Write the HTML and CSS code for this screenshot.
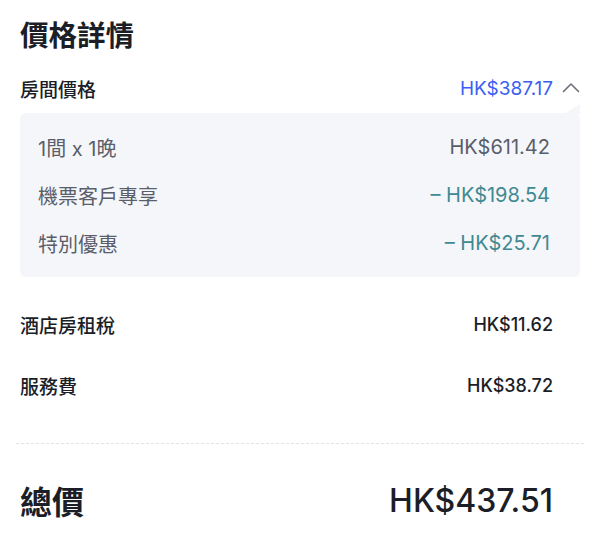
FILE: index.html
```html
<!DOCTYPE html>
<html lang="zh-Hant">
<head>
<meta charset="utf-8">
<link rel="stylesheet" href="styles.css">
</head>
<body>
<div class="page">
  <h1 class="title">價格詳情</h1>
  <div class="room-row">
    <span class="label">房間價格</span>
    <span class="room-price">HK$387.17
      <svg class="chev" width="18" height="11" viewBox="0 0 18 11"><path d="M1.5 9.5 L9 2 L16.5 9.5" fill="none" stroke="#6b6f78" stroke-width="1.6" stroke-linecap="round" stroke-linejoin="round"/></svg>
    </span>
  </div>
  <div class="detail">
    <div class="drow"><span>1間 x 1晚</span><span class="amt">HK$611.42</span></div>
    <div class="drow"><span>機票客戶專享</span><span class="amt disc">– HK$198.54</span></div>
    <div class="drow"><span>特別優惠</span><span class="amt disc">– HK$25.71</span></div>
  </div>
  <div class="fees">
    <div class="frow"><span class="label">酒店房租稅</span><span class="fprice">HK$11.62</span></div>
    <div class="frow"><span class="label">服務費</span><span class="fprice">HK$38.72</span></div>
  </div>
  <div class="divider"></div>
  <div class="total">
    <span class="tlabel">總價</span>
    <span class="tprice">HK$437.51</span>
  </div>
</div>
</body>
</html>
```
FILE: styles.css
```css
html, body {
  margin: 0;
  padding: 0;
  background: #ffffff;
}
body {
  font-family: Inter, "Noto Sans CJK TC", sans-serif;
  color: #1b1e27;
}
.page {
  width: 600px;
  padding: 16px 16px 0 16px;
  box-sizing: border-box;
}
.title {
  margin: 0 0 0 4px;
  height: 40px;
  line-height: 40px;
  font-size: 28.5px;
  font-weight: 700;
  color: #1b1e27;
}
.room-row {
  margin: 12px 4px 0 4px;
  height: 40px;
  display: flex;
  align-items: center;
  justify-content: space-between;
}
.label {
  font-size: 19px;
  font-weight: 500;
  color: #1b1e27;
}
.room-price {
  display: flex;
  align-items: center;
  gap: 9px;
  font-size: 19px;
  color: #3b5ef2;
}
.chev {
  display: block;
  margin-top: -2px;
}
.detail {
  position: relative;
  margin: 5px 4px 0 4px;
  padding: 10px 30px 10px 18px;
  background: #f5f6fa;
  border-radius: 6px;
}
.detail::before {
  content: "";
  position: absolute;
  right: 0;
  top: -9px;
  width: 16px;
  height: 10px;
  background: #f5f6fa;
  clip-path: polygon(100% 0, 100% 100%, 0 100%);
}
.drow {
  height: 48px;
  display: flex;
  align-items: center;
  justify-content: space-between;
  font-size: 20px;
  font-weight: 400;
  color: #5a5e6a;
}
.amt {
  font-size: 20px;
}
.disc {
  color: #3f8a92;
}
.fees {
  margin: 17px 31px 0 4px;
}
.frow {
  height: 61px;
  display: flex;
  align-items: center;
  justify-content: space-between;
}
.fprice {
  font-size: 18px;
  font-weight: 500;
  color: #1b1e27;
}
.divider {
  margin-top: 27px;
  border-top: 1.5px dashed #e2e4e9;
}
.total {
  margin: 26px 31px 0 4px;
  height: 60px;
  display: flex;
  align-items: center;
  justify-content: space-between;
}
.tlabel {
  font-size: 32px;
  font-weight: 700;
}
.tprice {
  font-size: 32px;
  font-weight: 500;
}
```
